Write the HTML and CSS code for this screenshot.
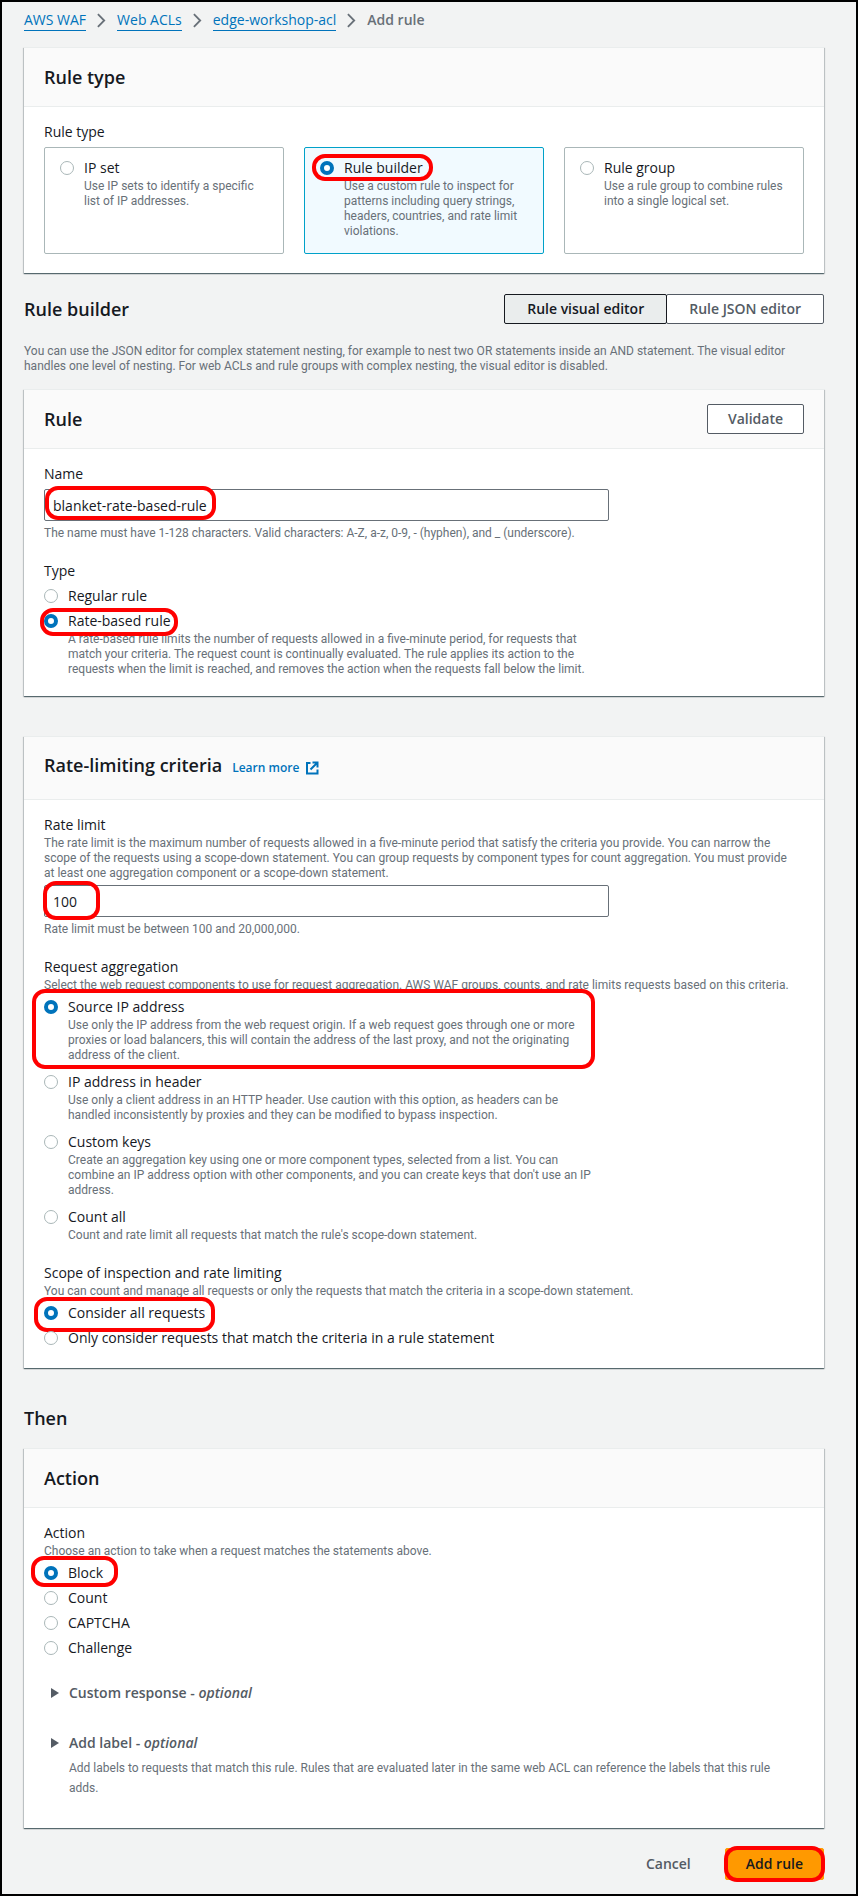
FILE: index.html
```html
<!DOCTYPE html>
<html lang="en">
<head>
<meta charset="utf-8">
<meta name="viewport" content="width=device-width, initial-scale=1">
<title>Add rule - AWS WAF</title>
<link rel="stylesheet" href="styles.css">
</head>
<body>
<div class="page">
  <nav class="breadcrumb" aria-label="Breadcrumb">
    <a href="#">AWS WAF</a>
    <svg class="chevron" viewBox="0 0 10 16" aria-hidden="true"><path d="M1 1l7 7-7 7"/></svg>
    <a href="#">Web ACLs</a>
    <svg class="chevron" viewBox="0 0 10 16" aria-hidden="true"><path d="M1 1l7 7-7 7"/></svg>
    <a href="#">edge-workshop-acl</a>
    <svg class="chevron" viewBox="0 0 10 16" aria-hidden="true"><path d="M1 1l7 7-7 7"/></svg>
    <span class="current">Add rule</span>
  </nav>

  <main>
    <section class="panel">
      <header class="panel-header"><h2>Rule type</h2></header>
      <div class="panel-body">
        <div class="group" role="radiogroup" aria-labelledby="rule-type">
          <div class="field-label" id="rule-type">Rule type</div>
          <div class="tiles">
            <div class="tile">
              <div class="option">
                <label><input type="radio" name="rule-type">IP set</label>
                <p class="option-text">Use IP sets to identify a specific list of IP addresses.</p>
              </div>
            </div>
            <div class="tile selected">
              <div class="option">
                <label><input type="radio" name="rule-type" checked>Rule builder</label>
                <p class="option-text">Use a custom rule to inspect for patterns including query strings, headers, countries, and rate limit violations.</p>
                <span class="mark mark-builder"></span>
              </div>
            </div>
            <div class="tile">
              <div class="option">
                <label><input type="radio" name="rule-type">Rule group</label>
                <p class="option-text">Use a rule group to combine rules into a single logical set.</p>
              </div>
            </div>
          </div>
        </div>
      </div>
    </section>

    <div class="builder-head">
      <h2>Rule builder</h2>
      <div class="segments">
        <button type="button" class="button active">Rule visual editor</button>
        <button type="button" class="button">Rule JSON editor</button>
      </div>
    </div>
    <p class="intro">You can use the JSON editor for complex statement nesting, for example to nest two OR statements inside an AND statement. The visual editor handles one level of nesting. For web ACLs and rule groups with complex nesting, the visual editor is disabled.</p>

    <section class="panel">
      <header class="panel-header">
        <h2>Rule</h2>
        <button type="button" class="button">Validate</button>
      </header>
      <div class="panel-body">
        <div class="group">
          <label class="field-label" for="name">Name</label>
          <div class="control">
            <input class="text" id="name" type="text" value="blanket-rate-based-rule">
            <span class="mark mark-name"></span>
          </div>
          <p class="hint">The name must have 1-128 characters. Valid characters: A-Z, a-z, 0-9, - (hyphen), and _ (underscore).</p>
        </div>
        <div class="group" role="radiogroup" aria-labelledby="type">
          <div class="field-label" id="type">Type</div>
          <div class="options">
            <div class="option"><label><input type="radio" name="type">Regular rule</label></div>
            <div class="option">
              <label><input type="radio" name="type" checked>Rate-based rule</label>
              <p class="option-text">A rate-based rule limits the number of requests allowed in a five-minute period, for requests that match your criteria. The request count is continually evaluated. The rule applies its action to the requests when the limit is reached, and removes the action when the requests fall below the limit.</p>
              <span class="mark mark-rate"></span>
            </div>
          </div>
        </div>
      </div>
    </section>

    <section class="panel spaced">
      <header class="panel-header tall">
        <h2>Rate-limiting criteria</h2>
        <a class="learn" href="#">Learn more
          <svg viewBox="0 0 14 14" aria-hidden="true"><path d="M5.500 2H2v10.500h10.500V8.500M7.500 1.500h5V6.500M12.500 1.500L5.500 8.500"/></svg>
        </a>
      </header>
      <div class="panel-body">
        <div class="group">
          <label class="field-label" for="limit">Rate limit</label>
          <p class="description">The rate limit is the maximum number of requests allowed in a five-minute period that satisfy the criteria you provide. You can narrow the scope of the requests using a scope-down statement. You can group requests by component types for count aggregation. You must provide at least one aggregation component or a scope-down statement.</p>
          <div class="control">
            <input class="text" id="limit" type="text" value="100">
            <span class="mark mark-limit"></span>
          </div>
          <p class="hint">Rate limit must be between 100 and 20,000,000.</p>
        </div>
        <div class="group" role="radiogroup" aria-labelledby="aggregation">
          <div class="field-label" id="aggregation">Request aggregation</div>
          <p class="description">Select the web request components to use for request aggregation. AWS WAF groups, counts, and rate limits requests based on this criteria.</p>
          <div class="options">
            <div class="option">
              <label><input type="radio" name="aggregation" checked>Source IP address</label>
              <p class="option-text">Use only the IP address from the web request origin. If a web request goes through one or more proxies or load balancers, this will contain the address of the last proxy, and not the originating address of the client.</p>
              <span class="mark mark-source"></span>
            </div>
            <div class="option">
              <label><input type="radio" name="aggregation">IP address in header</label>
              <p class="option-text">Use only a client address in an HTTP header. Use caution with this option, as headers can be handled inconsistently by proxies and they can be modified to bypass inspection.</p>
            </div>
            <div class="option">
              <label><input type="radio" name="aggregation">Custom keys</label>
              <p class="option-text">Create an aggregation key using one or more component types, selected from a list. You can combine an IP address option with other components, and you can create keys that don't use an IP address.</p>
            </div>
            <div class="option">
              <label><input type="radio" name="aggregation">Count all</label>
              <p class="option-text">Count and rate limit all requests that match the rule's scope-down statement.</p>
            </div>
          </div>
        </div>
        <div class="group" role="radiogroup" aria-labelledby="scope">
          <div class="field-label" id="scope">Scope of inspection and rate limiting</div>
          <p class="description">You can count and manage all requests or only the requests that match the criteria in a scope-down statement.</p>
          <div class="options">
            <div class="option">
              <label><input type="radio" name="scope" checked>Consider all requests</label>
              <span class="mark mark-scope"></span>
            </div>
            <div class="option"><label><input type="radio" name="scope">Only consider requests that match the criteria in a rule statement</label></div>
          </div>
        </div>
      </div>
    </section>

    <h2 class="then">Then</h2>

    <section class="panel">
      <header class="panel-header"><h2>Action</h2></header>
      <div class="panel-body">
        <div class="group" role="radiogroup" aria-labelledby="action">
          <div class="field-label" id="action">Action</div>
          <p class="description">Choose an action to take when a request matches the statements above.</p>
          <div class="options">
            <div class="option">
              <label><input type="radio" name="action" checked>Block</label>
              <span class="mark mark-block"></span>
            </div>
            <div class="option"><label><input type="radio" name="action">Count</label></div>
            <div class="option"><label><input type="radio" name="action">CAPTCHA</label></div>
            <div class="option"><label><input type="radio" name="action">Challenge</label></div>
          </div>
        </div>
        <div class="expanders">
          <div class="expander">
            <button type="button" aria-expanded="false"><svg viewBox="0 0 8 10" aria-hidden="true"><path d="M0 0l8 5-8 5z"/></svg><span>Custom response - <em>optional</em></span></button>
          </div>
          <div class="expander">
            <button type="button" aria-expanded="false"><svg viewBox="0 0 8 10" aria-hidden="true"><path d="M0 0l8 5-8 5z"/></svg><span>Add label - <em>optional</em></span></button>
            <p>Add labels to requests that match this rule. Rules that are evaluated later in the same web ACL can reference the labels that this rule adds.</p>
          </div>
        </div>
      </div>
    </section>

    <div class="actions">
      <button type="button" class="button link">Cancel</button>
      <div class="control">
        <button type="submit" class="button primary">Add rule</button>
        <span class="mark mark-submit"></span>
      </div>
    </div>
  </main>
</div>
</body>
</html>
```
FILE: styles.css
```css
* { box-sizing: border-box; }

body {
  margin: 0;
  background: #f2f3f3;
  color: #16191f;
  font-family: "Open Sans", "Noto Sans", sans-serif;
  font-size: 14px;
  line-height: 22px;
}

h2, p { margin: 0; }
h2 { font-size: 18px; line-height: 22px; font-weight: 600; }
a { color: #0073bb; text-decoration: none; }
button, input { font: inherit; color: inherit; }

.page {
  min-height: 100vh;
  border: 2px solid #000;
  padding: 7px 32px 13px 22px;
}

.breadcrumb { display: flex; align-items: center; gap: 11px; margin-bottom: 16px; }
.breadcrumb a { border-bottom: 1px solid #0073bb; line-height: 20px; }
.breadcrumb .current { color: #687078; font-weight: 600; }
.chevron { width: 9px; height: 15px; fill: none; stroke: #687078; stroke-width: 2; }

.panel {
  background: #fff;
  border-top: 1px solid #eaeded;
  box-shadow: 0 1px 1px 0 rgba(0, 28, 36, .5), 1px 1px 1px 0 rgba(0, 28, 36, .15), -1px 1px 1px 0 rgba(0, 28, 36, .15);
}
.panel.spaced { margin-top: 40px; }
.panel-header {
  display: flex;
  align-items: center;
  justify-content: space-between;
  min-height: 59px;
  padding: 14px 20px;
  background: #fafafa;
  border-bottom: 1px solid #eaeded;
}
.panel-header.tall { justify-content: flex-start; align-items: baseline; padding: 17px 20px 20px; gap: 10px; }
.panel-body { padding: 14px 20px 19px; }
.group + .group { margin-top: 19px; }

.learn { display: inline-flex; align-items: center; gap: 6px; font-size: 12px; font-weight: 600; }
.learn svg { width: 14px; height: 14px; fill: none; stroke: #0073bb; stroke-width: 2; }

.field-label { display: block; }
.description, .hint, .option-text, .intro, .expander p {
  color: #687078;
  font-family: Roboto, "Open Sans", sans-serif;
  font-size: 12px;
  line-height: 15px;
}
.description, .expander p { padding-right: 8px; }
.hint { margin-top: 5px; }

.control { position: relative; }
.description + .control, .field-label + .control { margin-top: 4px; }
.text {
  display: block;
  width: 100%;
  max-width: 565px;
  height: 32px;
  padding: 4px 8px;
  border: 1px solid #687078;
  border-radius: 2px;
  background: #fff;
}

.tiles { display: grid; grid-template-columns: repeat(3, 1fr); gap: 20px; margin-top: 4px; }
.tile { padding: 9px 15px 14px; border: 1px solid #aab7b8; border-radius: 2px; }
.tile.selected { border-color: #00a1c9; background: #f1faff; }

.options { display: flex; flex-direction: column; gap: 3px; padding-top: 3px; }
.option { position: relative; max-width: 565px; }
.option label { display: flex; align-items: center; gap: 10px; }
.option-text { padding-left: 24px; }
.options .option-text { padding-right: 14px; }
.options .option:not(:last-child) .option-text { margin-bottom: 5px; }
.option input {
  appearance: none;
  flex: none;
  width: 14px;
  height: 14px;
  margin: 0;
  border: 1px solid #aab7b8;
  border-radius: 50%;
  background: #fff;
}
.option input:checked { border: 4px solid #0073bb; }

.builder-head { display: flex; align-items: center; justify-content: space-between; margin-top: 21px; }
.intro { margin: 20px 0 15px; }

.button {
  min-height: 30px;
  padding: 3px 20px;
  border: 1px solid #545b64;
  border-radius: 2px;
  background: #fff;
  color: #545b64;
  font-weight: 600;
  white-space: nowrap;
}
.segments { display: flex; }
.segments .button { padding: 3px 22px; }
.segments .button + .button { margin-left: -1px; }
.button.active { position: relative; border-color: #16191f; background: #eaeded; color: #16191f; }
.button.link { border-color: transparent; background: transparent; }
.button.primary { min-height: 32px; border-color: #ff9900; background: #ff9900; color: #16191f; }

.then { margin: 39px 0 19px; }

.expanders { display: flex; flex-direction: column; gap: 28px; margin-top: 23px; padding-bottom: 11px; }
.expander button {
  display: flex;
  align-items: center;
  gap: 10px;
  padding: 0 7px;
  border: 0;
  background: none;
  color: #545b64;
  font-weight: 600;
}
.expander svg { width: 8px; height: 10px; fill: #545b64; }
.expander p { margin-top: 4px; padding-left: 25px; line-height: 20px; }

.actions { display: flex; align-items: center; justify-content: flex-end; gap: 13px; margin-top: 20px; }

/* Red outlines that call out the choices to make */
.mark { position: absolute; border: 4px solid #f00; border-radius: 13px; pointer-events: none; }
.mark-builder { left: -8px; top: -3px; width: 121px; height: 27px; }
.mark-name { left: 1px; top: -3px; width: 171px; height: 34px; }
.mark-rate { left: -4px; top: -2px; width: 138px; height: 28px; }
.mark-limit { left: -1px; top: -4px; width: 57px; height: 39px; }
.mark-source { left: -12px; top: -7px; width: 563px; height: 80px; }
.mark-scope { left: -10px; top: -5px; width: 181px; height: 35px; }
.mark-block { left: -13px; top: -6px; width: 87px; height: 31px; }
.mark-submit { left: -1px; top: -2px; right: -1px; height: 36px; }
```
